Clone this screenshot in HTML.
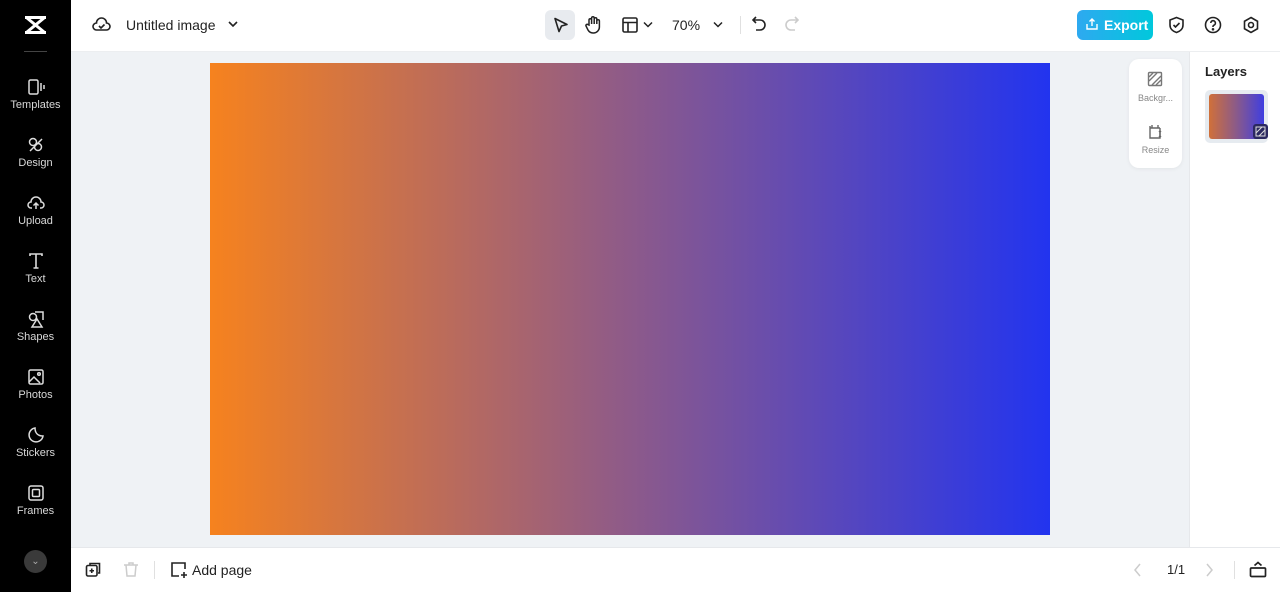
<!DOCTYPE html>
<html><head><meta charset="utf-8"><style>
*{margin:0;padding:0;box-sizing:border-box}
body{width:1280px;height:592px;overflow:hidden;font-family:"Liberation Sans",sans-serif;background:#fff;position:relative}
.side{position:absolute;left:0;top:0;width:71px;height:592px;background:#000}
.item{position:absolute;left:0;width:71px;text-align:center;color:#d8d8d8;font-size:11px}
.item svg{display:block;margin:0 auto 3px}
.top{position:absolute;left:71px;top:0;right:0;height:52px;background:#fff;border-bottom:1px solid #eceef0}
.canvas{position:absolute;left:71px;top:52px;width:1118px;height:495px;background:#eff2f5}
.grad{position:absolute;left:210px;top:63px;width:840px;height:472px;background:linear-gradient(90deg,#f6821e,#8d5a8a 50%,#2234ef)}
.right{position:absolute;left:1189px;top:52px;width:91px;height:495px;background:#fff;border-left:1px solid #e6e8eb}
.bottom{position:absolute;left:71px;top:547px;right:0;height:45px;background:#fff;border-top:1px solid #e6e8eb}
.t{position:absolute;font-size:14px;color:#222}
</style></head><body>
<div class="side">
 <svg style="position:absolute;left:23px;top:15px" width="25" height="20" viewBox="0 0 25 20"><path d="M2 2.5h21M2 17.5h21M4 3l17 14M21 3L4 17" stroke="#fff" stroke-width="3" fill="none"/></svg>
 <div style="position:absolute;left:24px;top:51px;width:23px;height:1px;background:#444"></div>
 <div class="item" style="top:78px"><svg width="18" height="18" viewBox="0 0 18 18" fill="none" stroke="#ddd" stroke-width="1.5"><rect x="2" y="2" width="9" height="14" rx="1.5"/><path d="M14 5v8M17 7v4"/></svg>Templates</div>
 <div class="item" style="top:136px"><svg width="18" height="18" viewBox="0 0 18 18" fill="none" stroke="#ddd" stroke-width="1.5"><circle cx="6" cy="6" r="3.5"/><circle cx="11" cy="11" r="3.5"/><path d="M3 15l12-12"/></svg>Design</div>
 <div class="item" style="top:194px"><svg width="18" height="18" viewBox="0 0 18 18" fill="none" stroke="#ddd" stroke-width="1.5"><path d="M5 14H4a3 3 0 0 1 0-6 5 5 0 0 1 10 0 3 3 0 0 1 0 6h-1M9 15V9M6.5 11.5L9 9l2.5 2.5"/></svg>Upload</div>
 <div class="item" style="top:252px"><svg width="18" height="18" viewBox="0 0 18 18" fill="none" stroke="#ddd" stroke-width="1.6"><path d="M3 4V2h12v2M9 2v14M6.5 16h5"/></svg>Text</div>
 <div class="item" style="top:310px"><svg width="18" height="18" viewBox="0 0 18 18" fill="none" stroke="#ddd" stroke-width="1.5"><circle cx="6" cy="7" r="3.5"/><path d="M8 2h8v8M10 9l-5 8h10z"/></svg>Shapes</div>
 <div class="item" style="top:368px"><svg width="18" height="18" viewBox="0 0 18 18" fill="none" stroke="#ddd" stroke-width="1.5"><rect x="2" y="2" width="14" height="14" rx="1.5"/><path d="M2 14l5-5 6 6"/><circle cx="12" cy="6" r="1.3"/></svg>Photos</div>
 <div class="item" style="top:426px"><svg width="18" height="18" viewBox="0 0 18 18" fill="none" stroke="#ddd" stroke-width="1.5"><path d="M16 10A7 7 0 1 1 8 2c0 4 2 8 8 8z"/></svg>Stickers</div>
 <div class="item" style="top:484px"><svg width="18" height="18" viewBox="0 0 18 18" fill="none" stroke="#ddd" stroke-width="1.5"><rect x="2" y="2" width="14" height="14" rx="2"/><rect x="5.5" y="5.5" width="7" height="7" rx="1"/></svg>Frames</div>
 <div style="position:absolute;left:24px;top:550px;width:23px;height:23px;border-radius:50%;background:#3a3a3a;color:#aaa;font-size:10px;text-align:center;line-height:23px">⌄</div>
</div>
<div style="position:absolute;left:71px;top:272px;width:6px;height:48px;background:#2a2a2a;border-radius:0 6px 6px 0"></div>
<div class="top">
 <svg style="position:absolute;left:21px;top:16px" width="19" height="17" viewBox="0 0 19 17" fill="none" stroke="#222" stroke-width="1.6"><path d="M5 14H4.5a3.5 3.5 0 0 1 0-7 5 5 0 0 1 10 0 3.5 3.5 0 0 1 0 7z"/><path d="M7 10l2 2 3.5-3.5"/></svg>
 <div class="t" style="left:55px;top:17px">Untitled image</div>
 <svg style="position:absolute;left:157px;top:20px" width="10" height="8"><path d="M1 2l4 4 4-4" stroke="#222" stroke-width="1.6" fill="none"/></svg>
 <div style="position:absolute;left:474px;top:10px;width:30px;height:30px;border-radius:6px;background:#e8ebef"></div>
 <svg style="position:absolute;left:482px;top:17px" width="16" height="17"><path d="M2 1.5l12 6-5.5 1.5-2.5 5.5z" stroke="#222" stroke-width="1.6" fill="none" stroke-linejoin="round"/></svg>
 <svg style="position:absolute;left:514px;top:15px" width="17" height="19" viewBox="0 0 17 19" fill="none" stroke="#222" stroke-width="1.5"><path d="M4 10V5a1.3 1.3 0 0 1 2.6 0V9V3a1.3 1.3 0 0 1 2.6 0v6V4a1.3 1.3 0 0 1 2.6 0v5V6a1.3 1.3 0 0 1 2.6 0v6a6 6 0 0 1-6 6H8a6 6 0 0 1-5-3l-2-4a1.3 1.3 0 0 1 2.2-1.3z"/></svg>
 <svg style="position:absolute;left:551px;top:17px" width="16" height="16" fill="none" stroke="#222" stroke-width="1.6"><rect x="1" y="1" width="14" height="14" rx="1.5"/><path d="M1 5.5h14M6 5.5V15"/></svg>
 <svg style="position:absolute;left:572px;top:21px" width="10" height="8"><path d="M1 1.5l4 4 4-4" stroke="#222" stroke-width="1.5" fill="none"/></svg>
 <div class="t" style="left:601px;top:17px">70%</div>
 <svg style="position:absolute;left:642px;top:21px" width="10" height="8"><path d="M1 1.5l4 4 4-4" stroke="#222" stroke-width="1.5" fill="none"/></svg>
 <div style="position:absolute;left:669px;top:16px;width:1px;height:18px;background:#e0e0e0"></div>
 <svg style="position:absolute;left:680px;top:16px" width="16" height="17" fill="none" stroke="#222" stroke-width="1.6"><path d="M5 1L2 4l3 3M2 4h7a5 5 0 0 1 0 10H5"/></svg>
 <svg style="position:absolute;left:713px;top:16px" width="16" height="17" fill="none" stroke="#ccc" stroke-width="1.6"><path d="M11 1l3 3-3 3M14 4H7a5 5 0 0 0 0 10h4"/></svg>
 <div style="position:absolute;left:1006px;top:10px;width:76px;height:30px;border-radius:6px;background:linear-gradient(90deg,#2ea9f0,#00c8dc);color:#fff;font-weight:bold;font-size:14px;line-height:30px;padding-left:27px">Export</div>
 <svg style="position:absolute;left:1014px;top:17px" width="14" height="14" fill="none" stroke="#fff" stroke-width="1.4"><path d="M7 9V2M4.5 4.5L7 2l2.5 2.5M2 7v5h10V7"/></svg>
 <svg style="position:absolute;left:1097px;top:16px" width="17" height="18" fill="none" stroke="#222" stroke-width="1.6"><path d="M8.5 1.5L15 4v5c0 4-3 6.5-6.5 7.5C5 15.5 2 13 2 9V4z"/><path d="M5.5 9l2 2 4-4"/></svg>
 <svg style="position:absolute;left:1133px;top:16px" width="18" height="18" fill="none" stroke="#222" stroke-width="1.6"><circle cx="9" cy="9" r="7.5"/><path d="M6.8 7a2.3 2.3 0 1 1 3 2.2c-.6.3-.8.7-.8 1.3v.5"/><circle cx="9" cy="13.3" r=".5" fill="#222"/></svg>
 <svg style="position:absolute;left:1171px;top:16px" width="18" height="18" fill="none" stroke="#222" stroke-width="1.6"><path d="M9 1.5l6.5 3.75v7.5L9 16.5l-6.5-3.75v-7.5z"/><circle cx="9" cy="9" r="2.5"/></svg>
</div>
<div class="canvas"></div>
<div class="grad"></div>
<div style="position:absolute;left:1129px;top:59px;width:53px;height:109px;background:#fff;border-radius:10px;box-shadow:0 1px 4px rgba(0,0,0,.06)"></div>
<svg style="position:absolute;left:1147px;top:71px" width="16" height="16" fill="none" stroke="#777" stroke-width="1.4"><rect x="1.5" y="1.5" width="13" height="13" rx="1"/><path d="M2 10l8-8M5 14l9-9M9 14l5-5M2 6l4-4"/></svg>
<div style="position:absolute;left:1129px;top:93px;width:53px;text-align:center;font-size:9px;color:#888">Backgr...</div>
<svg style="position:absolute;left:1147px;top:124px" width="16" height="16" fill="none" stroke="#666" stroke-width="1.4"><path d="M3 2v12h10V4M3 4h10M5 1v3M11 1v3"/><path d="M13 7v6M12 8l1-1 1 1M12 12l1 1 1-1"/></svg>
<div style="position:absolute;left:1129px;top:145px;width:53px;text-align:center;font-size:9px;color:#888">Resize</div>
<div class="right">
 <div style="position:absolute;left:15px;top:12px;font-size:13px;font-weight:bold;color:#222">Layers</div>
 <div style="position:absolute;left:15px;top:38px;width:63px;height:53px;border-radius:5px;background:#e6ebf0"></div>
 <div style="position:absolute;left:19px;top:42px;width:55px;height:45px;border-radius:3px;background:linear-gradient(90deg,#d0703a,#8a5a8a 50%,#3f3ee0)"></div>
 <div style="position:absolute;left:63px;top:72px;width:15px;height:15px;border-radius:3px;background:#2b2860"></div>
 <svg style="position:absolute;left:65px;top:74px" width="11" height="11" fill="none" stroke="#ddd" stroke-width="1"><rect x="1" y="1" width="9" height="9"/><path d="M1 7l6-6M4 10l6-6"/></svg>
</div>
<div class="bottom">
 <svg style="position:absolute;left:14px;top:13px" width="17" height="17" fill="none" stroke="#222" stroke-width="1.6"><path d="M5 4V2.5h9.5V12H13"/><rect x="1.5" y="4.5" width="10.5" height="10.5" rx="1.5"/><path d="M6.75 7.5v4.5M4.5 9.75h4.5"/></svg>
 <svg style="position:absolute;left:52px;top:13px" width="16" height="17" fill="none" stroke="#ccc" stroke-width="1.5"><path d="M1 4h14M6 4V2h4v2M3 4l1 11h8l1-11"/></svg>
 <div style="position:absolute;left:83px;top:13px;width:1px;height:18px;background:#e0e0e0"></div>
 <svg style="position:absolute;left:99px;top:13px" width="18" height="18" fill="none" stroke="#222" stroke-width="1.6"><path d="M15 8V2H2v13h7"/><path d="M14 11v6M11 14h6"/></svg>
 <div class="t" style="left:121px;top:14px">Add page</div>
 <svg style="position:absolute;left:1062px;top:15px" width="10" height="14"><path d="M7 1L2 7l5 6" stroke="#ccc" stroke-width="1.5" fill="none"/></svg>
 <div class="t" style="left:1096px;top:14px;font-size:13px">1/1</div>
 <svg style="position:absolute;left:1133px;top:15px" width="10" height="14"><path d="M3 1l5 6-5 6" stroke="#ccc" stroke-width="1.5" fill="none"/></svg>
 <div style="position:absolute;left:1163px;top:13px;width:1px;height:18px;background:#e0e0e0"></div>
 <svg style="position:absolute;left:1178px;top:13px" width="18" height="17" fill="none" stroke="#222" stroke-width="1.7"><rect x="1.5" y="7" width="15" height="8.5" rx="1"/><path d="M5.5 4.5L9 1.5l3.5 3"/></svg>
</div>
</body></html>
